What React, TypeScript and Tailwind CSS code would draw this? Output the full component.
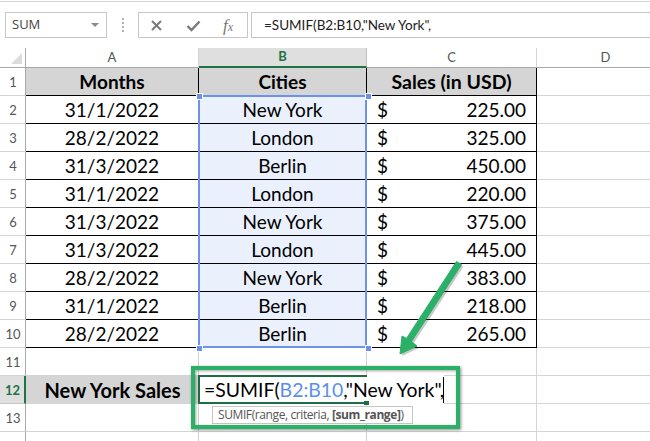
import React from "react";

const rows: [string, string, string][] = [
  ["31/1/2022", "New York", "225.00"],
  ["28/2/2022", "London", "325.00"],
  ["31/3/2022", "Berlin", "450.00"],
  ["31/1/2022", "London", "220.00"],
  ["31/3/2022", "New York", "375.00"],
  ["31/3/2022", "London", "445.00"],
  ["28/2/2022", "New York", "383.00"],
  ["31/1/2022", "Berlin", "218.00"],
  ["28/2/2022", "Berlin", "265.00"],
];

const RowNum = ({ n, active }: { n: number; active?: boolean }) => (
  <div
    className={
      active
        ? "h-[28px] flex items-center justify-center bg-[#dfdfdf] border-r-2 border-r-[#217346] border-b border-b-[#c8c8c8] text-[#217346] font-bold text-[13px] pt-[3px] pl-[1px]"
        : "h-[28px] flex items-center justify-center border-r border-r-[#a9a9a9] border-b border-b-[#d4d4d4] text-[#555555] text-[13px] pt-[3px] pl-[1px]"
    }
  >
    {n}
  </div>
);

const ColHead = ({ t, active }: { t: string; active?: boolean }) => (
  <div
    className={
      active
        ? "h-[20px] flex items-center justify-center bg-[#dfdfdf] border-b-2 border-b-[#217346] border-r border-r-[#c0c0c0] text-[#217346] font-bold text-[13px]"
        : "h-[20px] flex items-center justify-center bg-white border-b border-b-[#a9a9a9] border-r border-r-[#d4d4d4] text-[#555555] text-[13px]"
    }
  >
    {t}
  </div>
);

const cellText = "text-[19px] leading-none text-black";
const headCell = "h-[28px] flex items-center justify-center bg-[#d5d5d5] border-r border-b border-black font-bold leading-none text-black ";

export default function App() {
  return (
    <div className="relative w-[650px] h-[441px] overflow-hidden bg-white font-['Lato','Liberation_Sans',sans-serif]">
      {/* formula bar */}
      <div className="h-[48px] pt-[1px] font-['Open_Sans','Noto_Sans',sans-serif]">
        <div className="h-[1px] bg-[#d4d4d4]" />
        <div className="flex items-start pt-[10px] pl-[5px] pr-0">
          <div className="w-[102px] h-[26px] border border-[#c6c6c6] flex items-center justify-between pl-[6px] pr-[7px] text-[13px] text-[#444444]">
            <span>SUM</span>
            <span className="w-0 h-0 border-l-[4px] border-r-[4px] border-t-[4px] border-l-transparent border-r-transparent border-t-[#8a8a8a]" />
          </div>
          <div className="w-[31px] h-[26px] flex flex-col items-center justify-center gap-[2px]">
            <span className="w-[2px] h-[2px] bg-[#b0b0b0]" />
            <span className="w-[2px] h-[2px] bg-[#b0b0b0]" />
            <span className="w-[2px] h-[2px] bg-[#b0b0b0]" />
            <span className="w-[2px] h-[2px] bg-[#b0b0b0]" />
          </div>
          <div className="w-[110px] h-[26px] border border-[#c6c6c6] flex items-center pl-[11px] gap-[23px] text-[#777777]">
            <svg width="13" height="13" viewBox="0 0 13 13" fill="none" stroke="#7a7a7a" strokeWidth="2">
              <path d="M2 2 L11 11 M11 2 L2 11" />
            </svg>
            <svg width="15" height="13" viewBox="0 0 15 13" fill="none" stroke="#7a7a7a" strokeWidth="2.4">
              <path d="M1.5 7 L5.5 11 L13.5 2.5" />
            </svg>
            <span className="font-['Liberation_Serif',serif] italic text-[17px] leading-none text-[#777777] -ml-[1px]">
              f<span className="text-[12px]">x</span>
            </span>
          </div>
          <div className="flex-1 ml-[3px] h-[26px] border-y border-l border-[#c6c6c6] flex items-center pl-[12px] text-[13.5px] text-[#222222] font-['Lato',sans-serif]">
            =SUMIF(B2:B10,"New York",
          </div>
        </div>
      </div>

      {/* sheet */}
      <div className="grid grid-cols-[26px_173px_168px_170px_138px]">
        <div className="h-[20px] border-r border-r-[#a9a9a9] border-b border-b-[#a9a9a9] flex items-end justify-end pr-[3px] pb-[3px]">
          <div className="w-0 h-0 border-b-[11px] border-l-[11px] border-l-transparent border-b-[#dcdcdc]" />
        </div>
        <ColHead t="A" />
        <ColHead t="B" active />
        <ColHead t="C" />
        <ColHead t="D" />

        <RowNum n={1} />
        <div className={headCell + "text-[19px]"}>Months</div>
        <div className={headCell + "text-[19px]"}>Cities</div>
        <div className={headCell + "text-[19.5px]"}>Sales (in USD)</div>
        <div className="h-[28px] border-b border-b-[#d4d4d4]" />

        {rows.map(([d, c, s], i) => (
          <React.Fragment key={i}>
            <RowNum n={i + 2} />
            <div className={"h-[28px] flex items-center justify-center border-r border-b border-black " + cellText}>{d}</div>
            <div className={"h-[28px] flex items-center justify-center border-r border-b border-black bg-[#ebf1fc] " + cellText}>{c}</div>
            <div className={"h-[28px] flex items-center justify-between pl-[10px] pr-[10px] border-r border-b border-black " + cellText}>
              <span>$</span>
              <span>{s}</span>
            </div>
            <div className="h-[28px] border-b border-b-[#d4d4d4]" />
          </React.Fragment>
        ))}

        <RowNum n={11} />
        <div className="h-[28px] border-r border-r-[#d4d4d4] border-b border-b-[#d4d4d4]" />
        <div className="h-[28px] border-r border-r-[#d4d4d4] border-b border-b-[#d4d4d4]" />
        <div className="h-[28px] border-r border-r-[#d4d4d4] border-b border-b-[#d4d4d4]" />
        <div className="h-[28px] border-b border-b-[#d4d4d4]" />

        <RowNum n={12} active />
        <div className="h-[28px] flex items-center justify-center bg-[#d5d5d5] font-bold text-[20px] leading-none text-black">New York Sales</div>
        <div className="h-[28px] border-r border-r-[#d4d4d4] border-b border-b-[#d4d4d4]" />
        <div className="h-[28px] border-r border-r-[#d4d4d4] border-b border-b-[#d4d4d4]" />
        <div className="h-[28px] border-b border-b-[#d4d4d4]" />

        <RowNum n={13} />
        <div className="h-[28px] border-r border-r-[#d4d4d4] border-b border-b-[#d4d4d4]" />
        <div className="h-[28px] border-r border-r-[#d4d4d4] border-b border-b-[#d4d4d4]" />
        <div className="h-[28px] border-r border-r-[#d4d4d4] border-b border-b-[#d4d4d4]" />
        <div className="h-[28px] border-b border-b-[#d4d4d4]" />

        <div className="h-[10px] border-r border-r-[#a9a9a9]" />
        <div className="h-[10px] border-r border-r-[#d4d4d4]" />
        <div className="h-[10px] border-r border-r-[#d4d4d4]" />
        <div className="h-[10px] border-r border-r-[#d4d4d4]" />
        <div className="h-[10px]" />
      </div>

      {/* selection B2:B10 */}
      <div className="absolute left-[198px] top-[95px] w-[169px] h-[253px] border-2 border-[#6d93e8] pointer-events-none" />
      <div className="absolute left-[196px] top-[93px] w-[5px] h-[5px] bg-[#6d93e8] border border-white box-content" />
      <div className="absolute left-[365px] top-[93px] w-[5px] h-[5px] bg-[#6d93e8] border border-white box-content" />
      <div className="absolute left-[196px] top-[345px] w-[5px] h-[5px] bg-[#6d93e8] border border-white box-content" />
      <div className="absolute left-[365px] top-[345px] w-[5px] h-[5px] bg-[#6d93e8] border border-white box-content" />

      {/* edit cell */}
      <div className="absolute left-[198px] top-[375px] w-[246px] h-[29px] bg-white flex items-center pl-[4px] text-[19.4px] leading-none text-black whitespace-pre border-l-2 border-l-[#1f6e43]">
        =SUMIF(<span className="text-[#5b8fe8]">B2:B10</span>,"New York",
        <span className="absolute right-0 top-[2px] bottom-[1px] w-[1px] bg-black" />
      </div>
      <div className="absolute left-[198px] top-[375px] w-[169px] h-[2px] bg-[#1f6e43]" />
      <div className="absolute left-[198px] top-[402px] w-[166px] h-[2px] bg-[#1f6e43]" />
      <div className="absolute left-[364px] top-[401px] w-[5px] h-[4px] bg-[#1f6e43]" />

      {/* tooltip */}
      <div className="absolute left-[212px] top-[406px] w-[201px] h-[18px] bg-white border border-[#c6c6c6] flex items-center pl-[5px] text-[12px] text-[#555555] font-['Open_Sans',sans-serif] whitespace-pre tracking-[-0.4px]">
        SUMIF(range, criteria, <b>[sum_range]</b>)
      </div>

      {/* highlight box */}
      <div className="absolute left-[191px] top-[366px] w-[269px] h-[63px] border-4 border-[#2bb068] shadow-[1px_1px_3px_rgba(0,0,0,0.45),inset_1px_1px_3px_rgba(0,0,0,0.35)] pointer-events-none" />

      {/* arrow */}
      <svg className="absolute left-[390px] top-[250px] pointer-events-none" width="80" height="115" viewBox="0 0 80 115">
        <g transform="translate(2 2)" fill="#000000" opacity="0.22">
          <path d="M71.5 14.6 L21.5 91.6 L27 96 L10 104 L12 86 L16.5 88.4 L66.5 11.4 Z" />
        </g>
        <path d="M71.5 14.6 L21.5 91.6 L27 96 L10 104 L12 86 L16.5 88.4 L66.5 11.4 Z" fill="#2bb068" stroke="#2bb068" strokeWidth="1" strokeLinejoin="round" />
      </svg>
    </div>
  );
}
